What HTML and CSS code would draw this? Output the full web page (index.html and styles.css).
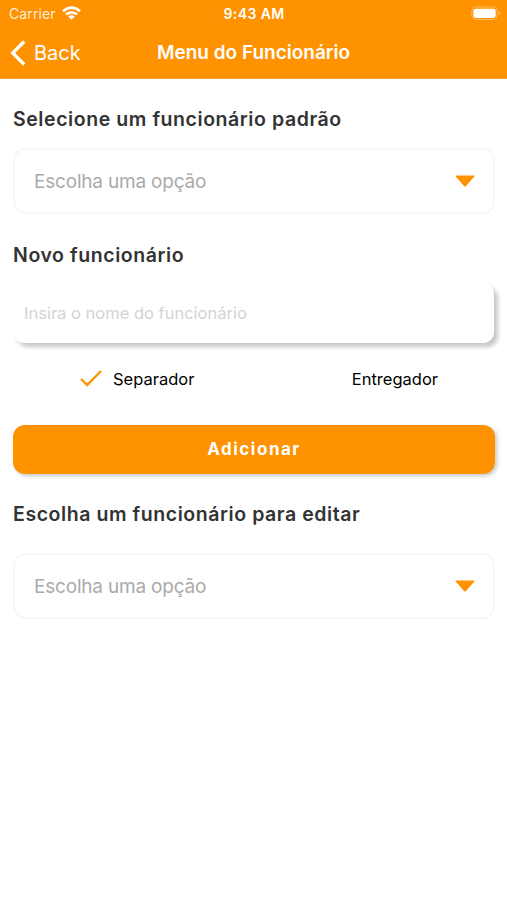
FILE: index.html
```html
<!DOCTYPE html>
<html lang="pt-BR">
<head>
<meta charset="utf-8">
<title>Menu do Funcionário</title>
<link rel="stylesheet" href="styles.css">
</head>
<body>
<header class="header">
  <div class="status">
    <div class="carrier"><span>Carrier</span>
      <svg class="wifi" width="19" height="14" viewBox="0 0 19 14" fill="none" stroke="#fff" stroke-width="2.6"><path d="M1 5.2Q9.5-2 18 5.2M4 8.6Q9.5 4 15 8.6"/><path d="M6.2 10.6Q9.5 8 12.8 10.6L9.5 13.8Z" fill="#fff" stroke="none"/></svg>
    </div>
    <span class="time">9:43 AM</span>
    <svg class="battery" width="30" height="15" viewBox="0 0 30 15"><rect x=".8" y="1" width="25.4" height="12.5" rx="4" fill="none" stroke="#ffb95c" stroke-width="1"/><rect x="2.3" y="2.7" width="22.4" height="9.2" rx="2.3" fill="#fff"/><path d="M27.7 5.3q3 2 0 4z" fill="#ffc477"/></svg>
  </div>
  <nav class="nav">
    <div class="back"><svg width="16" height="26" viewBox="0 0 16 26" fill="none" stroke="#fff" stroke-width="3.3"><path d="M14.2 1.5L2.7 13 14.2 24.5"/></svg><span>Back</span></div>
    <h1 class="title">Menu do Funcionário</h1>
    <span></span>
  </nav>
</header>
<main class="content">
  <h2 class="heading default">Selecione um funcionário padrão</h2>
  <div class="select"><span>Escolha uma opção</span><svg width="20" height="12" viewBox="0 0 20 12"><path d="M1 .5H19Q20 .7 19.3 1.6L11 11Q10 12 9 11L.7 1.6Q0 .7 1 .5Z" fill="#ff9200"/></svg></div>
  <h2 class="heading new">Novo funcionário</h2>
  <div class="field"><span>Insira o nome do funcionário</span></div>
  <div class="roles">
    <div class="role"><svg width="22" height="17" viewBox="0 0 22 17" fill="none" stroke="#ff9200" stroke-width="2.3"><path d="M1 9L7.2 15.1 21 1"/></svg><span>Separador</span></div>
    <div class="role other"><span>Entregador</span></div>
  </div>
  <div class="button"><span>Adicionar</span></div>
  <h2 class="heading edit">Escolha um funcionário para editar</h2>
  <div class="select"><span>Escolha uma opção</span><svg width="20" height="12" viewBox="0 0 20 12"><path d="M1 .5H19Q20 .7 19.3 1.6L11 11Q10 12 9 11L.7 1.6Q0 .7 1 .5Z" fill="#ff9200"/></svg></div>
</main>
</body>
</html>
```
FILE: styles.css
```css
* { box-sizing: border-box; }
body { margin: 0; background: #fff; font-family: Inter, "Liberation Sans", sans-serif; }
h1, h2 { margin: 0; }
svg { display: block; flex: none; }
span, h1, h2 { white-space: nowrap; }
.header { height: 79px; background: #ff9200; border-bottom: 1px solid #ffa42b; color: #fff; }
.status { height: 27px; display: grid; grid-template-columns: 1fr auto 1fr; align-items: center; padding: 0 6px 0 9px; }
.carrier { display: flex; align-items: center; gap: 6px; font-size: 14px; letter-spacing: .1px; color: #ffedd5; }
.wifi { margin-top: -2px; }
.time { font-size: 14px; font-weight: 600; letter-spacing: .4px; margin-right: 2px; }
.battery { justify-self: end; }
.nav { height: 51px; display: grid; grid-template-columns: 1fr auto 1fr; align-items: center; padding: 0 10px; }
.back { display: flex; align-items: center; gap: 8px; font-size: 20px; }
.title { font-size: 19px; font-weight: 600; }
.content { padding: 0 12px 0 13px; }
.heading { font-size: 19.5px; font-weight: 600; line-height: 24px; letter-spacing: .57px; color: #333; }
.default { margin: 28px 0 17px; }
.select { height: 66px; border: 2px solid #f7f7f7; border-radius: 12px; padding: 0 18px 0 19px; display: flex; align-items: center; justify-content: space-between; font-size: 19px; letter-spacing: -.2px; color: #aaa; }
.new { margin: 29px 0 16px; }
.field { height: 60px; margin-right: 1px; border-radius: 11px; background: #fff; box-shadow: 4px 4px 4px rgba(0, 0, 0, .22); display: flex; align-items: center; padding: 0 11px; font-size: 16.5px; color: #d3d3d3; }
.roles { height: 82px; padding: 0 57px 11px 67px; display: flex; justify-content: space-between; align-items: center; font-size: 16.5px; color: #000; }
.role { display: flex; align-items: center; gap: 11px; }
.button { height: 49px; border-radius: 12px; background: #ff9200; box-shadow: 2px 2px 4px rgba(0, 0, 0, .22); display: flex; align-items: center; justify-content: center; color: #fff; font-size: 17px; font-weight: 700; letter-spacing: 1.5px; padding-bottom: 1px; }
.edit { margin: 28px 0 27px; }
```
